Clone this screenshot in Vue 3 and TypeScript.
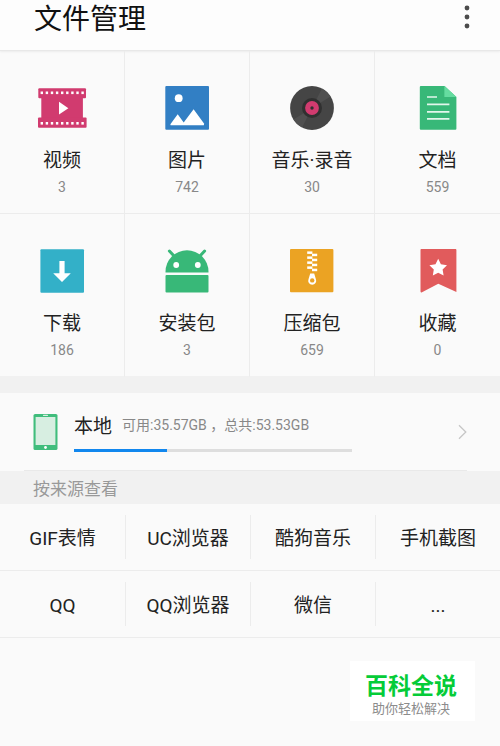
<script setup lang="ts">
interface Category {
  icon: string
  name: string
  count: number
}

const categories: Category[] = [
  { icon: 'video', name: '视频', count: 3 },
  { icon: 'picture', name: '图片', count: 742 },
  { icon: 'music', name: '音乐·录音', count: 30 },
  { icon: 'document', name: '文档', count: 559 },
  { icon: 'download', name: '下载', count: 186 },
  { icon: 'package', name: '安装包', count: 3 },
  { icon: 'archive', name: '压缩包', count: 659 },
  { icon: 'favorite', name: '收藏', count: 0 },
]

const sources: string[] = [
  'GIF表情', 'UC浏览器', '酷狗音乐', '手机截图',
  'QQ', 'QQ浏览器', '微信', '...',
]

const storage = { free: 35.57, total: 53.53 }
const usedPercent = ((storage.total - storage.free) / storage.total) * 100

const holes = Array.from({ length: 9 }, (_, i) => 3.6 + i * 5.1)
const teeth = [0, 1, 2, 3]
</script>

<template>
  <div class="page">
    <header class="header">
      <h1 class="title">文件管理</h1>
      <button class="more" type="button" aria-label="更多">
        <svg width="6" height="24" viewBox="0 0 6 24" fill="#4c4c4c">
          <circle cx="3" cy="3" r="2.4" />
          <circle cx="3" cy="12" r="2.4" />
          <circle cx="3" cy="21" r="2.4" />
        </svg>
      </button>
    </header>

    <main>
      <nav class="categories">
        <a v-for="item in categories" :key="item.name" class="category" href="#">
          <svg class="category-icon" viewBox="0 0 50 44" aria-hidden="true">
            <g v-if="item.icon === 'video'">
              <g fill="#d13b6f">
                <rect x="1.3" y="2.3" width="47.7" height="10" rx="1" />
                <rect x="4.3" y="8" width="41.6" height="28" />
                <rect x="1" y="31.5" width="48.6" height="10.2" rx="1" />
              </g>
              <g fill="#fff">
                <rect v-for="x in holes" :key="'t' + x" :x="x" y="5.5" width="2.4" height="2.6" />
                <rect v-for="x in holes" :key="'b' + x" :x="x" y="36" width="2.4" height="2.6" />
                <path d="M22 15.8 31.4 22.2 22 28.6Z" />
              </g>
            </g>
            <g v-else-if="item.icon === 'picture'">
              <rect x="3.3" y="0" width="43.7" height="43.8" rx="1" fill="#327fc4" />
              <g fill="#fff">
                <circle cx="16.7" cy="12.2" r="3.9" />
                <path d="M8.4 38.2 15.7 28.2 21.7 36.4 31.6 23.2 42.2 37.8 41.8 39.2H8.6Z" />
              </g>
            </g>
            <g v-else-if="item.icon === 'music'">
              <circle cx="25" cy="22" r="21.9" fill="#454545" />
              <path d="M25 22 35 2.6A21.9 21.9 0 0 1 43.6 10.6ZM25 22 15 41.4A21.9 21.9 0 0 1 6.4 33.4Z" fill="#505050" />
              <circle cx="25" cy="22" r="10" fill="#303030" />
              <circle cx="25" cy="22" r="6.9" fill="#d13b6f" />
              <circle cx="25" cy="22" r="1.7" fill="#303030" />
            </g>
            <g v-else-if="item.icon === 'document'">
              <path d="M7.8 0H31.6L43.4 11V42.8A1 1 0 0 1 42.4 43.8H7.8A1 1 0 0 1 6.8 42.8V1A1 1 0 0 1 7.8 0Z" fill="#38b878" />
              <path d="M31.4 0 43.4 11H31.4Z" fill="#65dca0" />
              <path d="M14 11H24M14 18.4H36.4M14 25.8H36.4M14 32.8H36.4" stroke="#e2f6ec" stroke-width="1.7" />
            </g>
            <g v-else-if="item.icon === 'download'">
              <rect x="3.4" y="0.2" width="43.6" height="43.5" rx="1" fill="#33b0c8" />
              <path d="M22.4 12H27.6V24.2H33.8L25 33 16.2 24.2H22.4Z" fill="#fff" />
            </g>
            <g v-else-if="item.icon === 'package'">
              <path d="M3.5 23.6V22.8A21.5 21.5 0 0 1 46.5 22.8V23.6Z" fill="#38b878" />
              <path d="M7.4 2 13 8M42.6 2 37 8" stroke="#38b878" stroke-width="3" stroke-linecap="round" />
              <rect x="3.5" y="26" width="43" height="17.6" rx="1" fill="#38b878" />
              <circle cx="14.2" cy="16" r="2.9" fill="#fff" />
              <circle cx="35.8" cy="16" r="2.9" fill="#fff" />
            </g>
            <g v-else-if="item.icon === 'archive'">
              <rect x="3" y="0" width="43.4" height="43.2" rx="1" fill="#eba323" />
              <g fill="#fff">
                <template v-for="n in teeth" :key="n">
                  <rect x="20.2" :y="2.4 + n * 5" width="5.2" height="2.5" />
                  <rect x="25" :y="4.7 + n * 5" width="5.2" height="2.5" />
                </template>
              </g>
              <path d="M23.2 24.6H27.2L28.9 30.3A4 4 0 1 1 21.5 30.3Z" fill="#fff" />
              <circle cx="25.2" cy="31.4" r="2.2" fill="#eba323" />
            </g>
            <g v-else>
              <path d="M8.3 0H42.6A1 1 0 0 1 43.4 1V43L25.3 34.8 9 43.2A1 1 0 0 1 7.5 42.6V1A1 1 0 0 1 8.3 0Z" fill="#e15b5c" />
              <path d="M25.2 9.8 27.9 15.3 34 16.2 29.6 20.5 30.6 26.6 25.2 23.8 19.8 26.6 20.8 20.5 16.4 16.2 22.5 15.3Z" fill="#fff" />
            </g>
          </svg>
          <span class="category-name">{{ item.name }}</span>
          <span class="category-count">{{ item.count }}</span>
        </a>
      </nav>

      <a class="storage" href="#">
        <svg class="phone" viewBox="0 0 25 36" aria-hidden="true">
          <rect x="0.5" y="0" width="24" height="36" rx="1.6" fill="#40bd7c" />
          <rect x="2.6" y="3" width="19.8" height="28" fill="#d7eee1" />
          <rect x="10" y="0.8" width="5" height="1.3" rx="0.6" fill="#d7eee1" />
          <circle cx="12.5" cy="33.5" r="1.4" fill="#fff" />
        </svg>
        <div class="storage-body">
          <div class="storage-text">
            <span class="storage-name">本地</span>
            <span class="storage-info">可用:{{ storage.free }}GB ，总共:{{ storage.total }}GB</span>
          </div>
          <div class="bar">
            <div class="bar-fill" :style="{ width: usedPercent + '%' }"></div>
          </div>
        </div>
        <svg class="chevron" viewBox="0 0 9 16" fill="none" aria-hidden="true">
          <path d="M1 1.2 7.8 8 1 14.8" stroke="#c6c6c6" stroke-width="1.3" />
        </svg>
      </a>

      <h2 class="section">按来源查看</h2>

      <nav class="sources">
        <a v-for="name in sources" :key="name" class="source" href="#">
          <span class="source-name">{{ name }}</span>
        </a>
      </nav>
    </main>

    <aside class="brand">
      <strong class="brand-name">百科全说</strong>
      <span class="brand-slogan">助你轻松解决</span>
    </aside>
  </div>
</template>

<style>
body {
  margin: 0;
  background: #fafafa;
}
</style>

<style scoped>
.page {
  position: relative;
  box-sizing: border-box;
  min-height: 100vh;
  background: #fafafa;
  color: #222;
  font-family: Roboto, "Noto Sans CJK SC", sans-serif;
}

a {
  color: inherit;
  text-decoration: none;
}

.header {
  display: flex;
  align-items: flex-start;
  justify-content: space-between;
  padding: 0 23px 10px 34px;
  background: #fdfdfd;
  border-bottom: 1px solid #e8e8e8;
  box-shadow: 0 1px 2px rgba(0, 0, 0, 0.06);
}

.title {
  margin: 0;
  font-size: 28px;
  line-height: 40px;
  font-weight: 400;
  color: #111;
}

.more {
  display: flex;
  justify-content: center;
  width: 20px;
  padding: 5px 0 0;
  border: 0;
  background: none;
}

.categories {
  display: grid;
  grid-template-columns: repeat(4, 1fr);
  border-bottom: 16px solid #f1f1f1;
}

.category {
  display: flex;
  flex-direction: column;
  align-items: center;
  padding: 35px 0 16px;
  border-right: 1px solid #ececec;
  border-bottom: 1px solid #ececec;
}

.category:nth-child(4n) {
  border-right: 0;
}

.category:nth-child(n + 5) {
  border-bottom-color: #f1f1f1;
}

.category-icon {
  width: 50px;
  height: 44px;
}

.category-name {
  margin-top: 16px;
  font-size: 19px;
  line-height: 30px;
}

.category-count {
  margin-top: 1px;
  font-size: 14px;
  line-height: 20px;
  color: #888;
}

.storage {
  display: flex;
  align-items: center;
  padding: 19px 33px;
  position: relative;
}

.storage::after {
  content: "";
  position: absolute;
  left: 24px;
  right: 33px;
  bottom: 0;
  height: 1px;
  background: #e9e9e9;
}

.phone {
  flex: none;
  width: 25px;
  height: 36px;
}

.storage-body {
  flex: 1;
  margin: 0 106px 0 16px;
}

.storage-text {
  display: flex;
  align-items: flex-start;
  gap: 10px;
  white-space: nowrap;
}

.storage-name {
  font-size: 19px;
  line-height: 30px;
}

.storage-info {
  font-size: 14px;
  line-height: 26px;
  color: #888;
}

.bar {
  height: 3px;
  margin-top: 7px;
  background: #dedede;
}

.bar-fill {
  height: 100%;
  background: #1187ee;
}

.chevron {
  flex: none;
  width: 9px;
  height: 16px;
}

.section {
  margin: 0;
  padding: 3px 33px 0;
  background: #f1f1f1;
  font-size: 17px;
  line-height: 30px;
  font-weight: 400;
  color: #999;
}

.sources {
  display: grid;
  grid-template-columns: repeat(4, 1fr);
}

.source {
  display: flex;
  padding: 11px 0;
  border-bottom: 1px solid #ececec;
}

.source-name {
  flex: 1;
  padding-top: 4px;
  border-left: 1px solid #ececec;
  font-size: 19px;
  line-height: 40px;
  text-align: center;
}

.source:nth-child(4n + 1) .source-name {
  border-left: 0;
}

.brand {
  position: absolute;
  right: 25px;
  bottom: 25px;
  display: flex;
  flex-direction: column;
  align-items: center;
  box-sizing: border-box;
  width: 125px;
  padding: 12px 3px 4px 0;
  background: #fff;
}

.brand-name {
  font-size: 23px;
  line-height: 27px;
  font-weight: 700;
  color: #05cc38;
}

.brand-slogan {
  font-size: 13px;
  line-height: 17px;
  color: #8c8c8c;
}
</style>
